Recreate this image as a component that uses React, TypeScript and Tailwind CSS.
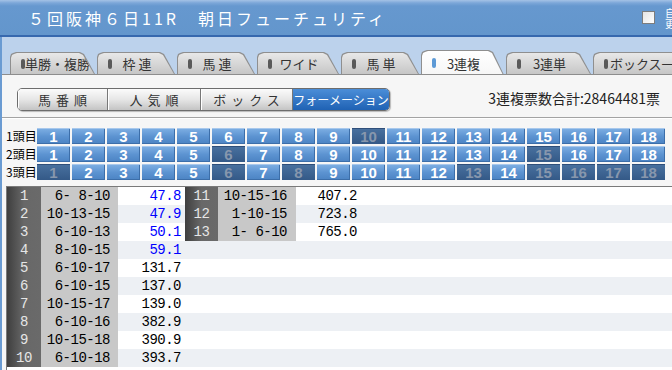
import React from 'react';

type Tab = { label: string; w: string; active?: boolean };

const tabs: Tab[] = [
  { label: '単勝・複勝', w: 'w-[85px]' },
  { label: '枠 連', w: 'w-[78px]' },
  { label: '馬 連', w: 'w-[78px]' },
  { label: 'ワイド', w: 'w-[82px]' },
  { label: '馬 単', w: 'w-[78px]' },
  { label: '3連複', w: 'w-[83px]', active: true },
  { label: '3連単', w: 'w-[85px]' },
  { label: 'ボックス一括', w: 'w-[100px]' },
];

const modes = [
  { label: '馬番順', w: 'w-[89px]', spaced: true },
  { label: '人気順', w: 'w-[93px]', spaced: true },
  { label: 'ボックス', w: 'w-[92px]', spaced: true },
  { label: 'フォーメーション', w: 'w-[97px]', active: true },
];

// disabled horse numbers per leg
const disabled: Record<number, number[]> = {
  1: [10],
  2: [6, 15],
  3: [1, 6, 8, 13, 15, 16, 17, 18],
};

const results: [string, string][] = [
  ['6- 8-10', '47.8'],
  ['10-13-15', '47.9'],
  ['6-10-13', '50.1'],
  ['8-10-15', '59.1'],
  ['6-10-17', '131.7'],
  ['6-10-15', '137.0'],
  ['10-15-17', '139.0'],
  ['6-10-16', '382.9'],
  ['10-15-18', '390.9'],
  ['6-10-18', '393.7'],
  ['10-15-16', '407.2'],
  ['1-10-15', '723.8'],
  ['1- 6-10', '765.0'],
];

const horses = Array.from({ length: 18 }, (_, i) => i + 1);

function TabItem({ tab }: { tab: Tab }) {
  const shape =
    '[clip-path:polygon(0_100%,0_5px,1px_2px,3px_1px,6px_0,calc(100%-15px)_0,calc(100%-11px)_2px,100%_100%)]';
  return (
    <div
      className={`shrink-0 ${tab.w} ${
        tab.active ? 'h-[25px] -mb-px relative z-10' : 'h-[22px]'
      } pt-px pl-px bg-[#8f8f8f] ${shape}`}
    >
      <div
        className={`h-full w-[calc(100%-1px)] flex items-center ${shape} ${
          tab.active
            ? 'bg-gradient-to-b from-[#ffffff] to-[#f6f6f6]'
            : 'bg-gradient-to-b from-[#e8e8e8] to-[#c6c6c6]'
        }`}
      >
        <span
          className={`ml-[10px] w-[4px] h-[10px] rounded-full shrink-0 ${
            tab.active ? 'bg-[#5d9ad6]' : 'bg-[#5a5a5a]'
          }`}
        />
        <span
          className={`flex-1 pr-[12px] text-center text-[13px] leading-none whitespace-pre text-[#333] ${
            tab.label.length > 5 ? 'text-left pl-[2px]' : ''
          }`}
        >
          {tab.label}
        </span>
      </div>
    </div>
  );
}

function Cell({ n, off }: { n: number; off: boolean }) {
  return (
    <div
      className={`w-[33px] h-full shrink-0 flex items-center justify-center text-[15px] font-bold leading-none [font-family:'Liberation_Sans',sans-serif] ${
        off
          ? 'bg-gradient-to-b from-[#48709e] to-[#345987] text-[#8797ad] border-t border-[#2f4f7a]'
          : 'bg-gradient-to-b from-[#7badE2] via-[#5c93d1] to-[#4b83c3] text-white border-t border-[#a8c8ec] shadow-[inset_-1px_-1px_0_#3c6ea9]'
      }`}
    >
      {n}
    </div>
  );
}

function Row({ idx }: { idx: number }) {
  const a = results[idx];
  const b = results[idx + 10];
  const odds = (v: string) =>
    parseFloat(v) < 100 ? 'text-[#0000ff]' : 'text-black';
  return (
    <div
      className={`flex h-[18px] items-center ${
        idx % 2 === 1 ? 'bg-[#edf0f4]' : 'bg-white'
      }`}
    >
      <div className="w-[34px] h-full flex items-center justify-center text-[#e6e6e6] bg-gradient-to-r from-[#3f3f3f] via-[#686868] to-[#6a6a6a]">
        {idx + 1}
      </div>
      <div className="w-[77px] h-full flex items-center justify-end pr-[8px] bg-[#c8c8c8] whitespace-pre">
        {a[0]}
      </div>
      <div className={`w-[67px] h-full flex items-center justify-end pr-[4px] ${odds(a[1])}`}>
        {a[1]}
      </div>
      {b && (
        <>
          <div className="w-[33px] h-full flex items-center justify-center text-[#e6e6e6] bg-gradient-to-r from-[#3f3f3f] via-[#686868] to-[#6a6a6a]">
            {idx + 11}
          </div>
          <div className="w-[78px] h-full flex items-center justify-end pr-[9px] bg-[#c8c8c8] whitespace-pre">
            {b[0]}
          </div>
          <div className={`w-[63px] h-full flex items-center justify-end pr-[2px] ${odds(b[1])}`}>
            {b[1]}
          </div>
        </>
      )}
    </div>
  );
}

export default function App() {
  return (
    <div className="w-[672px] h-[370px] overflow-hidden bg-white flex flex-col [font-family:'Noto_Sans_CJK_JP',sans-serif]">
      {/* HEADER */}
      <div className="h-[37px] shrink-0 flex items-center overflow-hidden border-b-2 border-[#3668ae] bg-[linear-gradient(to_bottom,#a4c2e6_0px,#7ba6d8_3px,#6698cf_6px,#6396cc_100%)]">
        <div className="w-[642px] shrink-0 pl-[28px] text-white text-[16px] tracking-[3px] leading-none whitespace-nowrap">
          ５回阪神６日11R　朝日フューチュリティ
        </div>
        <div className="w-[13px] h-[13px] shrink-0 bg-gradient-to-br from-[#e4e4e4] to-[#ffffff] border border-[#7d7d7d]" />
        <div className="ml-[10px] shrink-0 text-white text-[10px] leading-[11px]">
          自動
          <br />
          更新
        </div>
      </div>

      {/* BODY */}
      <div className="flex-1 flex flex-col border-l-2 border-[#6a9bd2]">
        {/* TABS */}
        <div className="h-[37px] shrink-0 bg-[#bcd2ec] flex items-end pl-[8px] gap-[2px] overflow-hidden">
          {tabs.map((t) => (
            <TabItem key={t.label} tab={t} />
          ))}
        </div>

        {/* PANEL */}
        <div className="flex-1 flex flex-col bg-[#f6f6f6] border-t border-[#8d8d8d]">
          <div className="h-[42px] shrink-0 flex items-start justify-between pl-[15px] pr-[12px] pt-[13px]">
            <div className="flex h-[23px] rounded-[5px] border border-[#6d6d6d] overflow-hidden shadow-[1px_1px_1px_rgba(0,0,0,0.25)]">
              {modes.map((m, i) => (
                <div
                  key={m.label}
                  className={`${m.w} h-full flex items-center justify-center leading-none whitespace-nowrap ${
                    i > 0 ? 'border-l border-[#777]' : ''
                  } ${
                    m.active
                      ? 'bg-gradient-to-b from-[#4b8ed8] to-[#1f62b4] text-white text-[12px]'
                      : 'bg-gradient-to-b from-[#fbfbfb] via-[#e6e6e6] to-[#c4c4c4] text-[#333] text-[13px] shadow-[inset_1px_0_0_#fff]'
                  } ${m.spaced ? 'tracking-[5px] pl-[5px]' : ''}`}
                >
                  {m.label}
                </div>
              ))}
            </div>
            <div className="pt-[3px] text-[14px] leading-none text-[#222]">
              3連複票数合計:28464481票
            </div>
          </div>
          <div className="h-px shrink-0 bg-[#a3a3a3]" />
          <div className="h-px shrink-0 bg-white" />

          {/* HORSE GRID */}
          <div className="pt-[9px] flex flex-col gap-[2px]">
            {[1, 2, 3].map((leg) => (
              <div key={leg} className="flex h-[16px] items-center">
                <div className="w-[35px] shrink-0 pl-[4px] text-[12px] leading-none text-black">
                  {leg}頭目
                </div>
                <div className="flex h-full gap-[2px]">
                  {horses.map((n) => (
                    <Cell key={n} n={n} off={disabled[leg].includes(n)} />
                  ))}
                </div>
              </div>
            ))}
          </div>

          {/* RESULT TABLE */}
          <div className="mt-[6px] ml-[4px] flex-1 bg-white border-t border-l border-[#7a7a7a] text-[14px] tracking-[-0.5px] leading-none [font-family:'Liberation_Mono',monospace]">
            {Array.from({ length: 10 }, (_, i) => (
              <Row key={i} idx={i} />
            ))}
          </div>
        </div>
      </div>
    </div>
  );
}
